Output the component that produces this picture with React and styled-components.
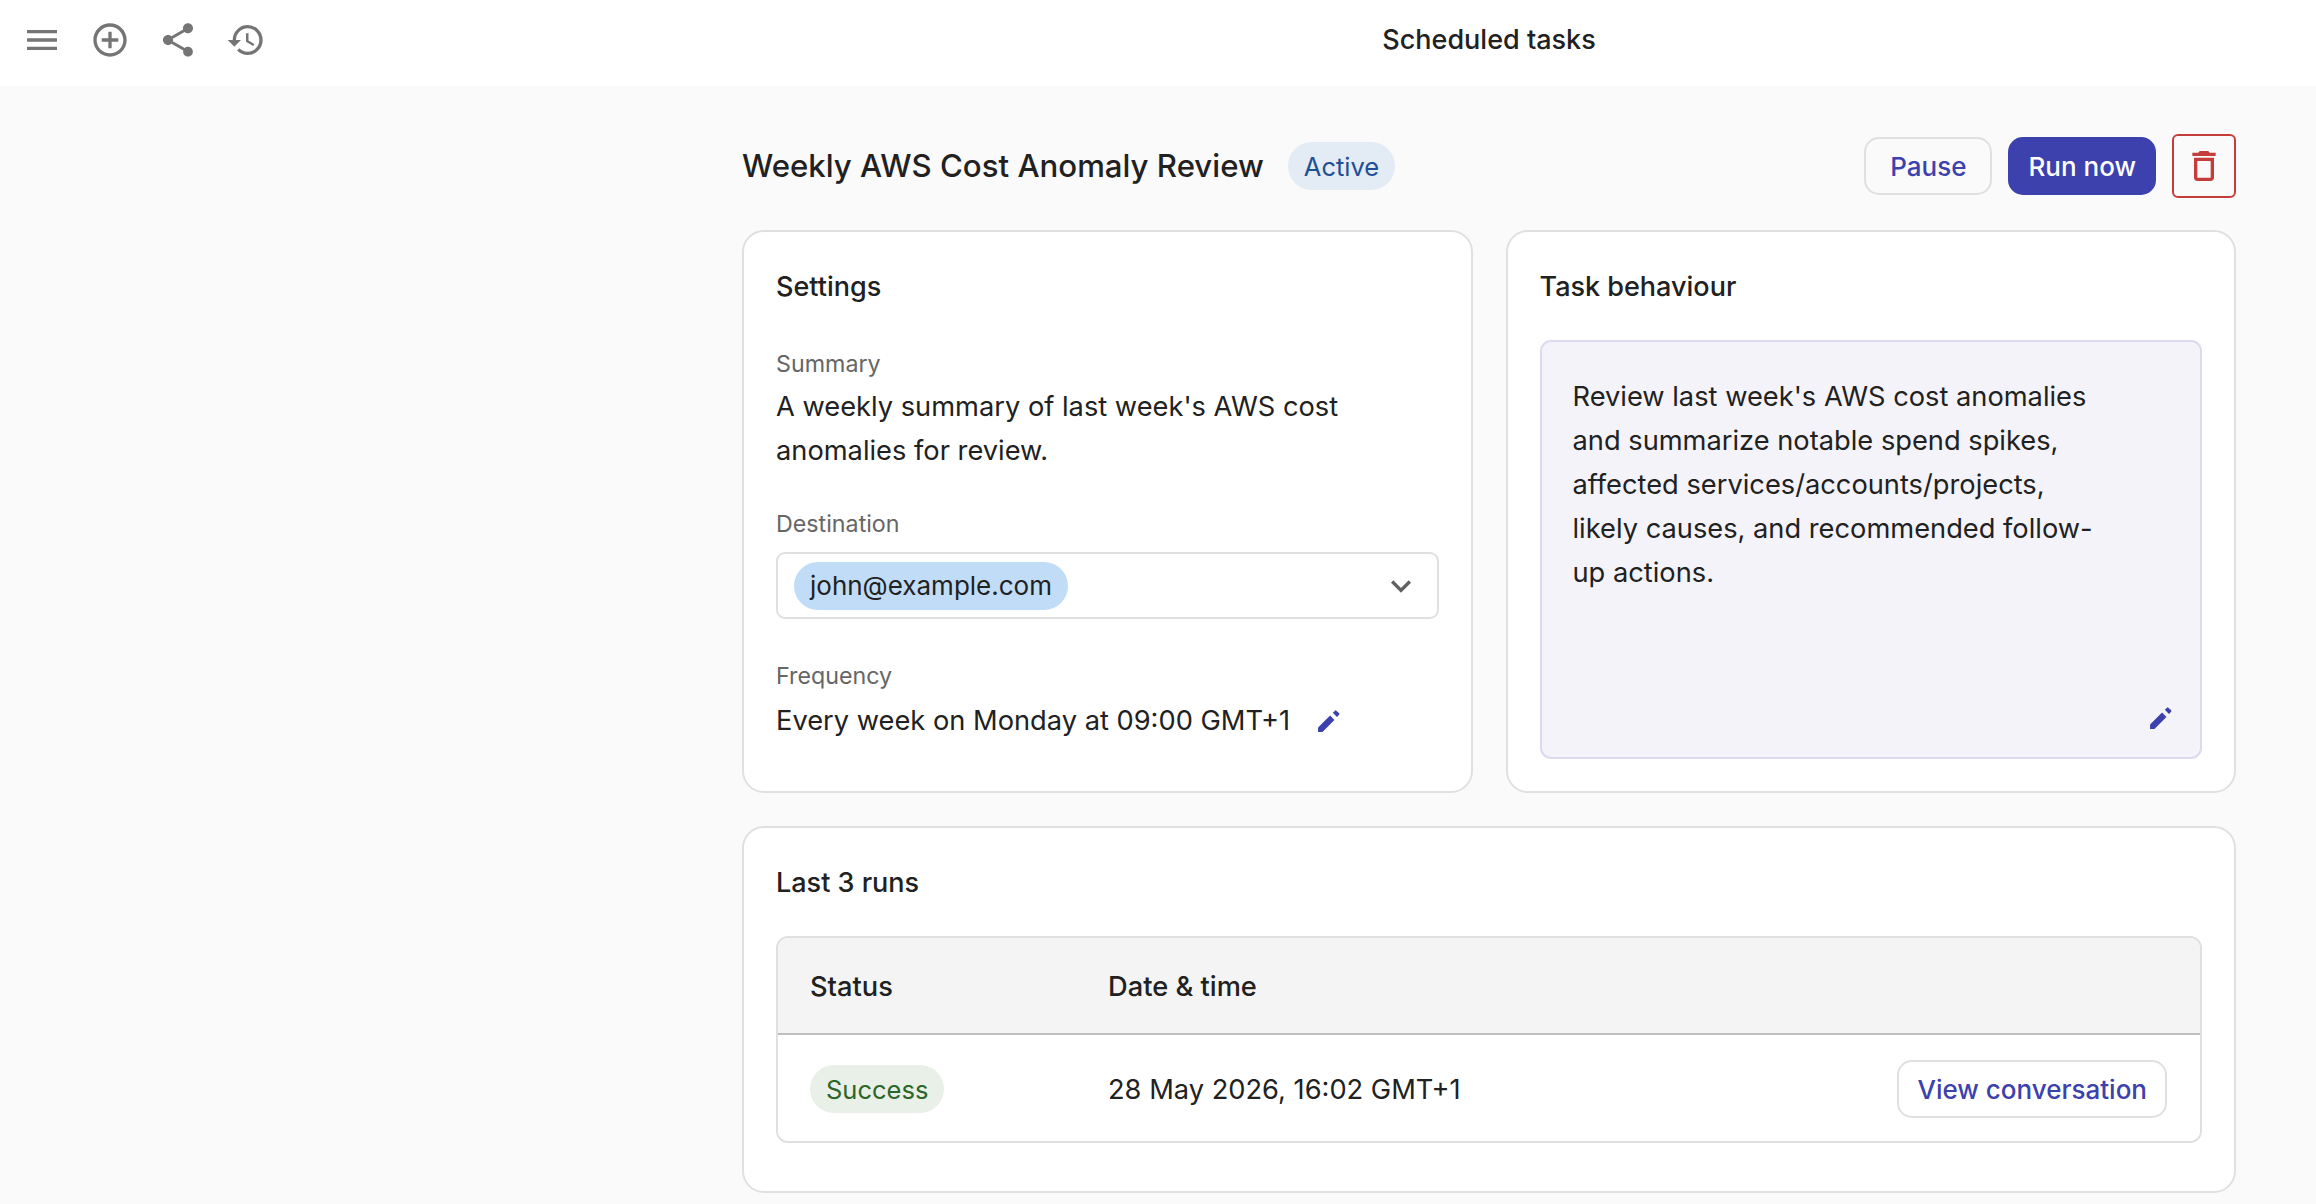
import styled, { createGlobalStyle } from 'styled-components';
import {
  MdMenu, MdAddCircleOutline, MdShare, MdHistory, MdDeleteOutline, MdExpandMore,
} from 'react-icons/md';

const GlobalStyle = createGlobalStyle`
  * {
    box-sizing: border-box;
  }
  html, body {
    margin: 0;
    background: #fafafa;
    color: #212121;
    font-family: Inter, "Liberation Sans", sans-serif;
  }
`;

const Topbar = styled.header`
  display: grid;
  grid-template-columns: 662px 1fr;
  height: 86px;
  background: #fff;
`;

const IconRow = styled.div`
  display: flex;
  align-items: flex-start;
  padding: 20px 0 0 8px;
`;

const IconButton = styled.div`
  display: flex;
  justify-content: center;
  width: 68px;
  height: 40px;
  color: #757575;
`;

const PageTitle = styled.div`
  text-align: center;
  padding-top: 20px;
  font-size: 27px;
  line-height: 40px;
  font-weight: 500;
`;

const Shell = styled.div`
  display: flex;
`;

const BlankSide = styled.div`
  width: 662px;
  flex: none;
`;

const Main = styled.main`
  flex: 1;
  padding: 48px 80px 0;
`;

const HeaderRow = styled.div`
  display: flex;
  align-items: center;
  height: 64px;
  margin-bottom: 32px;
`;

const Heading = styled.h1`
  margin: 0;
  font-size: 31.2px;
  line-height: 44px;
  font-weight: 500;
`;

const Badge = styled.span`
  display: inline-flex;
  align-items: center;
  height: 48px;
  padding: 0 16px;
  border-radius: 24px;
  font-size: 25.5px;
  background: ${({ $tone }) => ($tone === 'green' ? '#e8f0e8' : '#e3ebf4')};
  color: ${({ $tone }) => ($tone === 'green' ? '#2c6628' : '#1f5096')};
`;

const StatusBadge = styled(Badge)`
  margin-left: 24px;
`;

const Actions = styled.div`
  display: flex;
  align-items: center;
  gap: 16px;
  margin-left: auto;
`;

const Button = styled.button`
  height: 58px;
  padding: 0 ${({ $primary }) => ($primary ? '20px' : '24px')};
  border: ${({ $primary }) => ($primary ? '0' : '2px solid #e0e0e0')};
  border-radius: 15px;
  background: ${({ $primary }) => ($primary ? '#3c41ad' : 'transparent')};
  color: ${({ $primary }) => ($primary ? '#fff' : '#3c41ad')};
  font-family: inherit;
  font-size: 26px;
  font-weight: 500;
`;

const RowButton = styled(Button)`
  padding: 0 18px;
`;

const DeleteButton = styled.button`
  display: flex;
  align-items: center;
  justify-content: center;
  width: 64px;
  height: 64px;
  padding: 0;
  border: 2px solid #c43d3a;
  border-radius: 6px;
  background: transparent;
  color: #c43d3a;
`;

const TopCards = styled.div`
  display: grid;
  grid-template-columns: 1fr 1fr;
  gap: 33px;
  margin-bottom: 33px;
`;

const Card = styled.section`
  background: #fff;
  border: 2px solid #e0e0e0;
  border-radius: 22px;
  padding: 36px 32px 32px;
`;

const CardTitle = styled.h2`
  margin: 0 0 34px;
  font-size: 27px;
  line-height: 38px;
  font-weight: 500;
`;

const FieldLabel = styled.div`
  font-size: 23.25px;
  line-height: 32px;
  color: #666;
`;

const SummaryLabel = styled(FieldLabel)`
  margin-top: 42px;
  margin-bottom: 5px;
`;

const DestinationLabel = styled(FieldLabel)`
  margin-top: 35px;
  margin-bottom: 12px;
`;

const FrequencyLabel = styled(FieldLabel)`
  margin-top: 41px;
  margin-bottom: 7px;
`;

const Value = styled.div`
  font-size: 27.25px;
  line-height: 44px;
`;

const FrequencyRow = styled.div`
  display: flex;
  align-items: center;
  gap: 27px;
  color: #3c41ad;
`;

const FrequencyText = styled(Value)`
  color: #212121;
`;

const SelectBox = styled.div`
  display: flex;
  align-items: center;
  justify-content: space-between;
  height: 67px;
  padding: 0 16px;
  border: 2px solid #e0e0e0;
  border-radius: 9px;
  color: #616161;
`;

const Chip = styled.span`
  display: inline-flex;
  align-items: center;
  height: 48px;
  padding: 0 16px;
  border-radius: 24px;
  background: #c1dcf7;
  color: #212121;
  font-size: 26px;
`;

const BehaviourBox = styled.div`
  position: relative;
  height: 419px;
  padding: 33px 96px 0 31px;
  background: #f4f3fa;
  border: 2px solid #dcdaf0;
  border-radius: 11px;
  font-size: 27.25px;
  line-height: 44px;
`;

const BoxEdit = styled.span`
  position: absolute;
  right: 27px;
  bottom: 27px;
  display: flex;
  color: #3c41ad;
`;

const RunsCard = styled(Card)`
  padding-bottom: 48px;
`;

const Table = styled.div`
  border: 2px solid #e0e0e0;
  border-radius: 12px;
  overflow: hidden;
`;

const TableRow = styled.div`
  display: grid;
  grid-template-columns: 298px 1fr auto;
  align-items: center;
  padding: ${({ $head }) => ($head ? '1px' : '2px')} 33px 0 32px;
  height: ${({ $head }) => ($head ? '97px' : '106px')};
  background: ${({ $head }) => ($head ? '#f4f4f4' : '#fff')};
  border-bottom: ${({ $head }) => ($head ? '2px solid #bdbdbd' : '0')};
  font-size: 27.25px;
  font-weight: ${({ $head }) => ($head ? 500 : 400)};
`;

const SuccessCell = styled.div`
  display: flex;
`;

function PencilIcon() {
  return (
    <svg width="24" height="24" viewBox="0 0 22 22" fill="currentColor" aria-hidden="true">
      <path d="M1 17 12 6l4 4L5 21H1z" />
      <path d="M14.5 3.5l2-2q.6-.5 1.2 0l2.6 2.5q.5.6 0 1.2l-2 2.1z" />
    </svg>
  );
}

export default function App() {
  return (
    <>
      <GlobalStyle />
      <Topbar>
        <IconRow>
          <IconButton><MdMenu size={40} /></IconButton>
          <IconButton><MdAddCircleOutline size={40} /></IconButton>
          <IconButton><MdShare size={40} /></IconButton>
          <IconButton><MdHistory size={40} /></IconButton>
        </IconRow>
        <PageTitle>Scheduled tasks</PageTitle>
      </Topbar>
      <Shell>
        <BlankSide />
        <Main>
          <HeaderRow>
            <Heading>Weekly AWS Cost Anomaly Review</Heading>
            <StatusBadge>Active</StatusBadge>
            <Actions>
              <Button>Pause</Button>
              <Button $primary>Run now</Button>
              <DeleteButton aria-label="Delete"><MdDeleteOutline size={40} /></DeleteButton>
            </Actions>
          </HeaderRow>
          <TopCards>
            <Card>
              <CardTitle>Settings</CardTitle>
              <SummaryLabel>Summary</SummaryLabel>
              <Value>A weekly summary of last week's AWS cost anomalies for review.</Value>
              <DestinationLabel>Destination</DestinationLabel>
              <SelectBox>
                <Chip>john@example.com</Chip>
                <MdExpandMore size={40} />
              </SelectBox>
              <FrequencyLabel>Frequency</FrequencyLabel>
              <FrequencyRow>
                <FrequencyText>Every week on Monday at 09:00 GMT+1</FrequencyText>
                <PencilIcon />
              </FrequencyRow>
            </Card>
            <Card>
              <CardTitle>Task behaviour</CardTitle>
              <BehaviourBox>
                Review last week's AWS cost anomalies and summarize notable spend spikes, affected
                services/accounts/projects, likely causes, and recommended follow-up actions.
                <BoxEdit><PencilIcon /></BoxEdit>
              </BehaviourBox>
            </Card>
          </TopCards>
          <RunsCard>
            <CardTitle>Last 3 runs</CardTitle>
            <Table>
              <TableRow $head>
                <div>Status</div>
                <div>Date &amp; time</div>
              </TableRow>
              <TableRow>
                <SuccessCell><Badge $tone="green">Success</Badge></SuccessCell>
                <div>28 May 2026, 16:02 GMT+1</div>
                <RowButton>View conversation</RowButton>
              </TableRow>
            </Table>
          </RunsCard>
        </Main>
      </Shell>
    </>
  );
}
